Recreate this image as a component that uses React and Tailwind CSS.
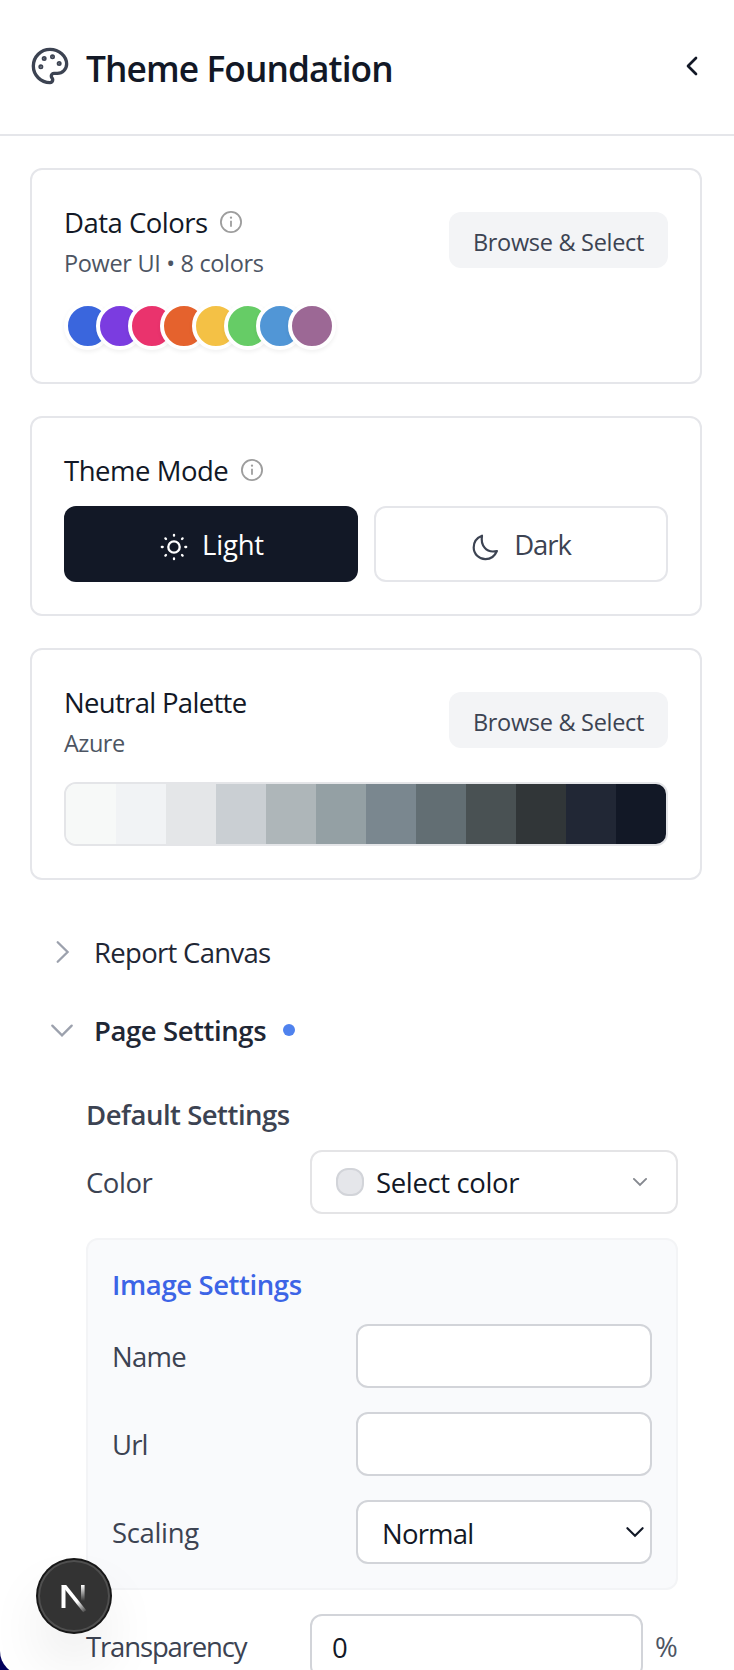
import React from 'react';

const dataColors = [
  'bg-[#3a66dd]',
  'bg-[#7b3ce0]',
  'bg-[#ea336d]',
  'bg-[#e5622d]',
  'bg-[#f4c145]',
  'bg-[#66cc66]',
  'bg-[#5196d6]',
  'bg-[#9c6895]',
];

const neutrals = [
  'bg-[#f7f9f8]',
  'bg-[#f1f3f5]',
  'bg-[#e4e6e8]',
  'bg-[#cacfd3]',
  'bg-[#aeb6b9]',
  'bg-[#94a0a4]',
  'bg-[#7a878f]',
  'bg-[#626e73]',
  'bg-[#495153]',
  'bg-[#313638]',
  'bg-[#212735]',
  'bg-[#121826]',
];

function PaletteIcon() {
  return (
    <svg className="size-10 shrink-0 text-[#3c4352]" viewBox="0 0 24 24" fill="none" stroke="currentColor" strokeWidth="2" strokeLinecap="round" strokeLinejoin="round">
      <circle cx="13.5" cy="6.5" r=".5" fill="currentColor" />
      <circle cx="17.5" cy="10.5" r=".5" fill="currentColor" />
      <circle cx="8.5" cy="7.5" r=".5" fill="currentColor" />
      <circle cx="6.5" cy="12.5" r=".5" fill="currentColor" />
      <path d="M12 2C6.5 2 2 6.5 2 12s4.5 10 10 10c.926 0 1.648-.746 1.648-1.688 0-.437-.18-.835-.437-1.125-.29-.289-.438-.652-.438-1.125a1.64 1.64 0 0 1 1.668-1.668h1.996c3.051 0 5.555-2.503 5.555-5.554C21.965 6.012 17.461 2 12 2z" />
    </svg>
  );
}

function InfoIcon() {
  return (
    <svg className="mb-[2px] size-6 shrink-0 text-[#9d9d9d]" viewBox="0 0 24 24" fill="none" stroke="currentColor" strokeWidth="1.8">
      <circle cx="12" cy="12" r="10.1" />
      <path d="M12 10.7v6.1" strokeLinecap="butt" />
      <circle cx="12" cy="7.7" r="1.15" fill="currentColor" stroke="none" />
    </svg>
  );
}

function SunIcon() {
  return (
    <svg className="size-7 shrink-0" viewBox="-14 -14 28 28" fill="none" stroke="currentColor" strokeWidth="2.3" strokeLinecap="round">
      <circle r="5.7" />
      <path d="M0-12.2v.9M0 12.2v-.9M-12.2 0h.9M12.2 0h-.9M-8.6-8.6l.6.6M8.6-8.6l-.6.6M-8.6 8.6l.6-.6M8.6 8.6l-.6-.6" />
    </svg>
  );
}

function MoonIcon() {
  return (
    <svg className="size-7 shrink-0" viewBox="-1 -1 28 28" fill="none" stroke="currentColor" strokeWidth="2.2" strokeLinejoin="round">
      <path d="M10 1.700C4.600 3.800 1.700 8.400 1.700 13.500a11.600 11.600 0 0 0 11.800 11.600c5 0 9.300-3 11.400-8.100C19.500 18.300 15.300 17 12.600 13.600 9.800 10.200 9.200 6.300 10 1.700z" />
    </svg>
  );
}

function BrowseButton() {
  return (
    <button className="flex h-14 w-[219px] shrink-0 items-center justify-center whitespace-nowrap rounded-xl bg-[#f3f4f6] pt-[3px] text-[23.5px] tracking-[-0.3px] text-[#3c4352]">
      Browse &amp; Select
    </button>
  );
}

function Card({ children }) {
  return <section className="rounded-xl border-2 border-[#e5e6ea] p-8">{children}</section>;
}

function ImageField({ label, children }) {
  return (
    <div className="flex h-16 items-center justify-between">
      {label}
      {children}
    </div>
  );
}

const fieldBox = 'h-16 w-[296px] rounded-xl border-2 border-[#d2d4d9] bg-white';

export default function App() {
  return (
    <div className="relative h-[1670px] w-[734px] overflow-hidden bg-[#02005c] font-['Open_Sans','Noto_Sans',sans-serif] text-[27.5px] leading-10 text-[#121826]">
      <div className="h-[1675px] overflow-hidden rounded-bl-[24px] bg-white">
        <header className="flex h-[136px] items-center justify-between border-b-2 border-[#e5e6ea] pr-[26px] pb-[2px] pl-[30px]">
          <div className="flex items-center gap-4">
            <PaletteIcon />
            <h1 className="whitespace-nowrap pt-[3px] text-[35.3px] font-semibold leading-[50px] tracking-[-0.91px]">Theme Foundation</h1>
          </div>
          <button aria-label="Collapse">
            <svg className="size-8" viewBox="0 0 24 24" fill="none" stroke="currentColor" strokeWidth="2" strokeLinecap="round" strokeLinejoin="round">
              <path d="m15 18-6-6 6-6" />
            </svg>
          </button>
        </header>

        <main className="flex flex-col gap-8 pt-8 pr-8 pl-[30px]">
          <Card>
            <div className="flex items-center justify-between">
              <div>
                <div className="flex items-center gap-[11px]">
                  <h2 className="whitespace-nowrap leading-[42px] tracking-[-0.5px]">Data Colors</h2>
                  <InfoIcon />
                </div>
                <p className="mt-[2px] -mb-[2px] whitespace-nowrap pt-px text-[23.5px] leading-[33px] tracking-[-0.33px] text-[#4d5563]">Power UI • 8 colors</p>
              </div>
              <BrowseButton />
            </div>
            <div className="mt-6 flex -space-x-4">
              {dataColors.map((color) => (
                <span key={color} className={`size-12 rounded-full border-4 border-white shadow-[0_2px_4px_rgba(0,0,0,0.06)] ${color}`} />
              ))}
            </div>
          </Card>

          <Card>
            <div className="flex items-center gap-3">
              <h2 className="whitespace-nowrap leading-[42px] tracking-[-0.47px]">Theme Mode</h2>
              <InfoIcon />
            </div>
            <div className="mt-[14px] grid grid-cols-2 gap-4">
              <button className="flex h-[76px] items-center justify-center gap-[14px] rounded-xl bg-[#121826] pl-[2px] text-white">
                <span className="pt-[6px]"><SunIcon /></span>
                <span className="pt-[2px] tracking-[-0.2px]">Light</span>
              </button>
              <button className="flex h-[76px] items-center justify-center gap-[15px] rounded-xl border-2 border-[#e5e6ea] text-[#3c4352]">
                <span className="pt-[6px]"><MoonIcon /></span>
                <span className="pt-[2px] tracking-[-1.1px]">Dark</span>
              </button>
            </div>
          </Card>

          <Card>
            <div className="flex items-center justify-between">
              <div>
                <h2 className="whitespace-nowrap leading-[42px] tracking-[-0.68px]">Neutral Palette</h2>
                <p className="mt-[2px] -mb-[2px] pt-px text-[23.5px] leading-[33px] tracking-[-0.5px] text-[#4d5563]">Azure</p>
              </div>
              <BrowseButton />
            </div>
            <div className="mt-6 flex h-16 overflow-hidden rounded-xl border-2 border-[#e4e5e8]">
              {neutrals.map((color) => (
                <span key={color} className={`flex-1 ${color}`} />
              ))}
            </div>
          </Card>
        </main>

        <div className="mt-[33px] pr-14 pl-[48px]">
          <button className="flex h-[78px] items-center gap-[18px] text-[#1f2735]">
            <svg className="size-7 text-[#9ca1ad]" viewBox="0 0 28 28" fill="none" stroke="currentColor" strokeWidth="2.3" strokeLinecap="round">
              <path d="m9.700 4.300 9.900 9.700-9.900 9.700" />
            </svg>
            <span className="pt-[2px] tracking-[-0.7px]">Report Canvas</span>
          </button>
          <button className="flex h-[78px] items-center gap-[18px] text-[#1f2735]">
            <svg className="size-7 text-[#9ca1ad]" viewBox="0 0 28 28" fill="none" stroke="currentColor" strokeWidth="2.3" strokeLinecap="round">
              <path d="m4.300 9.600 9.700 9.800 9.700-9.800" />
            </svg>
            <span className="pt-[2px] font-semibold tracking-[-0.42px]">Page Settings</span>
            <span className="-ml-px size-3 rounded-full bg-[#4f82ee]" />
          </button>

          <div className="mt-[25px] pl-[38px] text-[#3c4352]">
            <h3 className="font-semibold leading-[42px] tracking-[-0.49px]">Default Settings</h3>
            <div className="mt-[14px] flex h-16 items-center justify-between">
              <span className="pt-[2px] tracking-[-0.45px]">Color</span>
              <button className="flex h-16 w-[368px] items-center rounded-xl border-2 border-[#e4e4e6] pr-[29px] pl-6 text-[#121826]">
                <span className="size-7 rounded-xl border-2 border-[#d2d4d9] bg-[#e5e6ea]" />
                <span className="ml-3 flex-1 pt-[2px] text-left tracking-[-0.36px]">Select color</span>
                <svg className="size-[14px] text-[#85888f]" viewBox="0 0 14 14" fill="none" stroke="currentColor" strokeWidth="1.9" strokeLinecap="round">
                  <path d="m.9 3.900 6.100 6.100 6.100-6.100" />
                </svg>
              </button>
            </div>

            <div className="mt-6 rounded-xl border-2 border-[#f3f4f6] bg-[#f9fafc] p-6">
              <h4 className="font-semibold leading-[42px] tracking-[-0.4px] text-[#3c64e6]">Image Settings</h4>
              <div className="mt-[18px] flex flex-col gap-6">
                <ImageField label={<span className="pt-[2px] tracking-[-0.75px]">Name</span>}>
                  <input className={fieldBox} />
                </ImageField>
                <ImageField label={<span className="pt-[2px] tracking-[-0.9px]">Url</span>}>
                  <input className={fieldBox} />
                </ImageField>
                <ImageField label={<span className="pt-[2px] tracking-[-0.35px]">Scaling</span>}>
                  <div className={`flex items-center justify-between pr-[6px] pl-6 text-[#121826] ${fieldBox}`}>
                    <span className="pt-[4px] tracking-[-0.8px]">Normal</span>
                    <svg className="h-[12px] w-[18px]" viewBox="0 0 18 12" fill="none" stroke="currentColor" strokeWidth="2.1" strokeLinecap="round">
                      <path d="m1.400 2.200 7.600 7.600 7.600-7.600" />
                    </svg>
                  </div>
                </ImageField>
              </div>
            </div>

            <div className="mt-6 flex h-16 items-center">
              <span className="w-[224px] pt-[2px] tracking-[-1.15px]">Transparency</span>
              <div className="flex h-16 w-[333px] items-center rounded-xl border-2 border-[#d2d4d9] pt-[4px] pl-5 text-[#121826]">0</div>
              <span className="ml-3 pt-[2px] text-[#4d5563]">%</span>
            </div>
          </div>
        </div>
      </div>

      <div className="absolute bottom-[38px] left-[38px] flex size-[72px] items-center justify-center rounded-full bg-[#333333] shadow-[0_0_0_2px_#171717,inset_0_0_0_2px_rgba(255,255,255,0.14),0_32px_64px_-16px_rgba(0,0,0,0.24)]">
        <svg className="size-10" viewBox="0 0 40 40" fill="none">
          <defs>
            <linearGradient id="stem" x1="0" y1="9" x2="0" y2="25" gradientUnits="userSpaceOnUse">
              <stop stopColor="#fff" />
              <stop offset="1" stopColor="#fff" stopOpacity="0" />
            </linearGradient>
            <linearGradient id="diagonal" x1="24" y1="25" x2="33" y2="36" gradientUnits="userSpaceOnUse">
              <stop stopColor="#fff" />
              <stop offset="1" stopColor="#fff" stopOpacity="0" />
            </linearGradient>
          </defs>
          <path d="M9.500 32V9" stroke="#fff" strokeWidth="4" />
          <path d="M7.500 9H12.200L32.200 34.300L29.200 36.300L11 13.500z" fill="url(#diagonal)" />
          <path d="M28.800 9V25" stroke="url(#stem)" strokeWidth="3.600" />
        </svg>
      </div>
    </div>
  );
}
